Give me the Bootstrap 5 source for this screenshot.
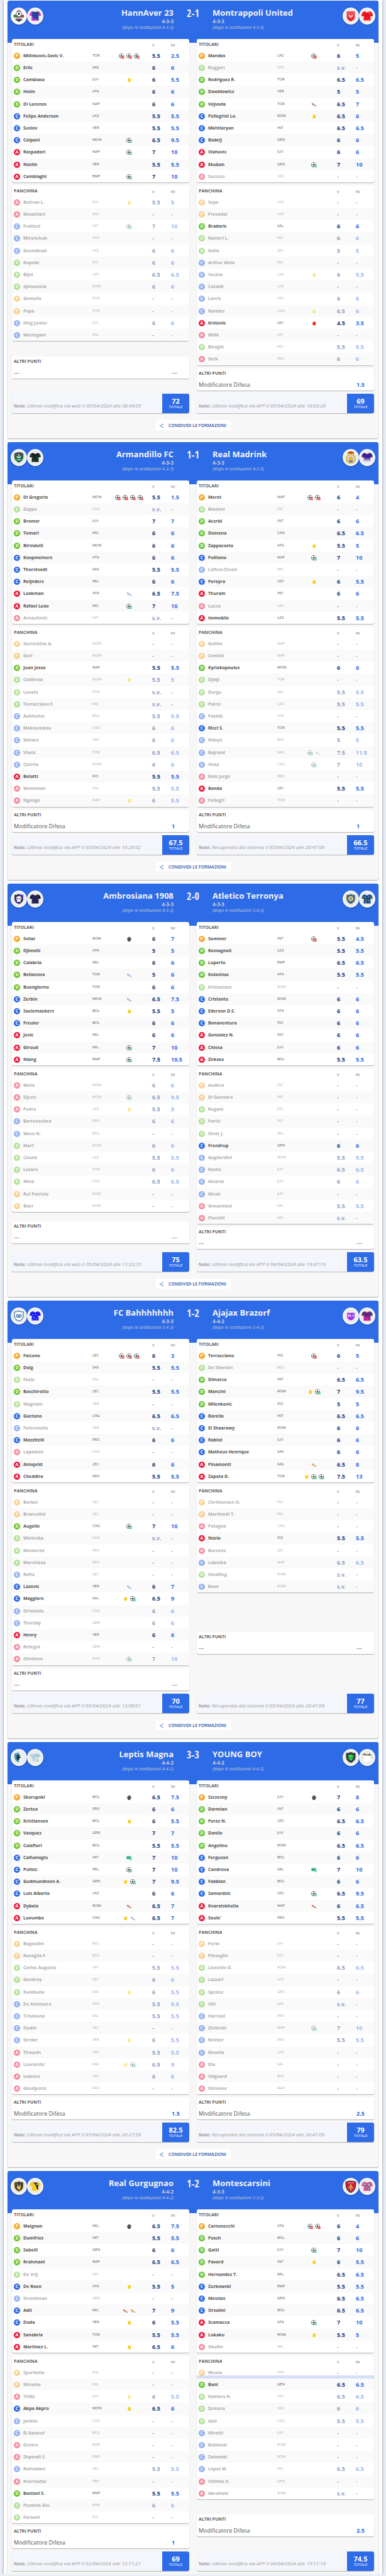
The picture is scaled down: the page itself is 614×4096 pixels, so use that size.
<!DOCTYPE html>
<html lang="it">
<head>
<meta charset="utf-8">
<meta name="viewport" content="width=device-width, initial-scale=1">
<title>Formazioni</title>
<link href="https://cdn.jsdelivr.net/npm/bootstrap@5.3.0/dist/css/bootstrap.min.css" rel="stylesheet">
<style>
  :root { --blu: #2e6be6; --notte: #1b3b7c; }
  body { background: #e9eef7; font-family: "Open Sans", "Noto Sans", sans-serif; color: #555; font-size: 8px; line-height: 12px; }
  .sprites { width: 0; height: 0; }
  .page { margin: 0 6px; padding: 1px 6px 0; background: #fff; box-shadow: 0 0 4px rgba(0,0,0,.4); }
  .match { background: #f7f7f7; border-radius: 3px; margin-bottom: 6px; box-shadow: 0 1px 2px rgba(0,0,0,.35); }
  .match.open { margin-bottom: 0; border-radius: 3px 3px 0 0; }
  .match-head { background: var(--blu); color: #f3f3f5; height: 67px; margin-bottom: -6px; padding: 11px 5px 0; border-radius: 3px 3px 0 0; }
  .crests { width: 52px; }
  .crests svg { width: 26px; height: 27px; filter: drop-shadow(0 1px 1px rgba(0,0,0,.25)); }
  .team-name { font-size: 13px; line-height: 17px; font-weight: 700; }
  .module { font-size: 8px; line-height: 10px; font-weight: 700; color: #c8cbd2; }
  .after { font-size: 7px; line-height: 10px; font-style: italic; color: #c8cbd2; }
  .score { width: 62px; font: 700 16px/19px "Open Sans Condensed", "Roboto Condensed", sans-serif; }
  .sides { padding: 0 7px; gap: 12px; }
  .side { flex: 1 1 0; min-width: 0; gap: 5px; }
  .box { background: #fff; border-radius: 3px; box-shadow: 0 1px 1px rgba(0,0,0,.28); }
  .players { width: 100%; table-layout: fixed; border-collapse: collapse; }
  .players th, .players td { padding: 0; white-space: nowrap; vertical-align: middle; }
  .players thead th { height: 17px; font-size: 6px; font-weight: 400; padding-top: 2px; }
  .players thead th.head { font-size: 7px; font-weight: 700; color: #606060; padding: 0 0 0 3px; }
  .players tbody tr { height: 19px; }
  .players tbody tr:nth-child(5n+4) { height: 20px; }
  .players tbody tr:nth-child(even) { background: #fafafa; }
  .players .pad { padding-left: 3px; }
  .dim > * { opacity: .5; }
  .moved { background: linear-gradient(to top, #d5dff8 5px, transparent 5px); }
  .role { display: block; width: 10px; height: 10px; border-radius: 50%; color: #fff; font: 700 7px/10px "Open Sans", sans-serif; text-align: center; }
  .role-P { background: #f9a82b; } .role-D { background: #62c524; } .role-C { background: #2e6be6; } .role-A { background: #f2183c; }
  .player { font-weight: 700; font-size: 7px; color: #505050; }
  .club { font-size: 6px; line-height: 8px; padding-bottom: 2px !important; }
  .events { text-align: center; padding-right: 7px !important; line-height: 9px; }
  .events span { display: inline-flex; gap: 3px; vertical-align: middle; }
  .events svg { width: 9px; height: 9px; display: block; }
  .vote { font-size: 9px; font-weight: 700; color: var(--notte); }
  .fvote { font-size: 9px; font-weight: 700; color: var(--blu); }
  .extra { padding: 0 3px; height: 35px; }
  .extra h3 { font-size: 7px; line-height: 16px; font-weight: 700; margin: 0; color: #606060; }
  .extra .line { line-height: 19px; font-size: 9px; }
  .extra .value { width: 25px; font-weight: 700; color: var(--blu); }
  .extra .none { color: #555; font-weight: 400; }
  .note { background: #f4f6fb; height: 31px; overflow: hidden; }
  .note p { padding: 13px 0 0 3px; font-size: 8px; color: #9a9a9a; white-space: nowrap; }
  .note strong { font-size: 7px; }
  .total { width: 43px; background: var(--blu); color: #fff; font-size: 6px; line-height: 8px; }
  .total strong { font-size: 11px; line-height: 10px; }
  .share-row { height: 40px; padding-top: 11px; }
  .share { background: #fff; border: 0; border-radius: 1px; width: 119px; height: 16px; padding: 0; font-size: 7px; line-height: 15px; font-weight: 600; color: #1f4ea3; }
  .share svg { width: 6px; height: 8px; }
  .foot { height: 5px; }
</style>
</head>
<body>
<svg class="sprites position-absolute" aria-hidden="true">
  <defs>
    <path id="shirt" d="M9 6 L12 7.4 Q13 8 14 7.4 L17 6 L20.6 8 L22 12.6 L19 13.6 L18.2 12.4 L18.6 20.6 H7.4 L7.8 12.4 L7 13.6 L4 12.6 L5.4 8Z"/>
    <path id="shield" d="M6 7 Q10 7 13 5.4 Q16 7 20 7 V13 Q20 19 13 21.6 Q6 19 6 13Z"/>
    <clipPath id="clipShirt"><use href="#shirt"/></clipPath>
    <clipPath id="clipShield"><use href="#shield"/></clipPath>
    <linearGradient id="redG" x1="0" y1="0" x2="0" y2="1"><stop offset="0" stop-color="#f2565c"/><stop offset="1" stop-color="#ec1c28"/></linearGradient>
    <linearGradient id="fadeG" x1="0" y1="0" x2="0" y2="1"><stop offset=".5" stop-color="#3a1f9c"/><stop offset="1" stop-color="#eee"/></linearGradient>
    <linearGradient id="purpG" x1="0" y1="0" x2="1" y2="0"><stop offset="0" stop-color="#c22be6"/><stop offset="1" stop-color="#7d2ff0"/></linearGradient>
    <linearGradient id="greenG" x1="0" y1="0" x2="0" y2="1"><stop offset=".2" stop-color="#4a4d50"/><stop offset=".6" stop-color="#12733f"/></linearGradient>
  </defs>
  <symbol id="i-ball" viewBox="0 0 18 18"><circle cx="8" cy="8" r="7.4" fill="#fff" stroke="#444" stroke-width="1"/><path fill="#2c2c2c" d="M8 4.8l3 2.2-1.1 3.6H6.1L5 7zM5.5.9h5L8 2.8zM.7 6l2 1.2-.8 3.2-1.3-1zM15.3 6l-2 1.2.8 3.2 1.3-1zM3.6 12l2.6.4.8 2.8-2-.5zM12.4 12l-2.6.4-.8 2.8 2-.5z"/></symbol>
  <symbol id="i-g" viewBox="0 0 18 18"><use href="#i-ball"/><circle cx="13.6" cy="12.6" r="4.2" fill="#3fd487"/><path d="M11.4 12.8l1.6 1.5 2.8-3" fill="none" stroke="#fff" stroke-width="1.3"/></symbol>
  <symbol id="i-x" viewBox="0 0 18 18"><use href="#i-ball"/><rect x="10" y="9" width="7.4" height="7.4" rx="2.6" fill="#f02a2a"/><path d="M12 11l3.4 3.4M15.4 11L12 14.4" stroke="#fff" stroke-width="1.3"/></symbol>
  <symbol id="i-y" viewBox="0 0 18 18"><path fill="#f5d226" d="M6.4 2.6l8 1.8q.9.2.7 1l-2 9q-.2.9-1 .7l-7-1.8q-.9-.2-.7-1l1.2-9q.1-.8.8-.7z"/></symbol>
  <symbol id="i-r" viewBox="0 0 18 18"><path fill="#f0231c" d="M6.4 2.6l8 1.8q.9.2.7 1l-2 9q-.2.9-1 .7l-7-1.8q-.9-.2-.7-1l1.2-9q.1-.8.8-.7z"/></symbol>
  <symbol id="shoe" viewBox="0 0 18 18"><path d="M1.5 4.5l3-1.5 2.5 2 8 6.5q2 1.6 1.5 3-2 .6-5-1.5L2.5 8.5Q1 7 1.5 4.5z"/><path d="M2 8l9 5.5 5.2 1" fill="none" stroke="#0005" stroke-width="1"/></symbol>
  <symbol id="i-k" viewBox="0 0 18 18"><path fill="#333" d="M5 15.5L3 8.5 2.2 5.5l1.5-.5L5.5 8 5.5 2l1.8-.3.7 4.8L9 1.2l1.9.2-.1 5.2 1.7-4.2 1.6.6-1 5.2 2-1.4 1.2 1-3.6 5-.7 3.2z"/><path fill="#e4c53b" d="M8 8.5l1.4-.6 1.3 2-1.7 2.6-1.6-1.6z"/></symbol>
  <symbol id="i-p" viewBox="0 0 18 18"><path fill="#17a06c" d="M1 3h14v9H1z"/><path d="M3 5.5h3M10 5.5h3M5 8h6" stroke="#a5e6cb" stroke-width="1.2" fill="none"/><circle cx="13.6" cy="11.6" r="4.2" fill="#3fd487"/><path d="M11.4 11.8l1.6 1.5 2.8-3" fill="none" stroke="#fff" stroke-width="1.3"/></symbol>
  <symbol id="disc" viewBox="0 0 26 27"><ellipse cx="13" cy="13.5" rx="12.9" ry="13.4" fill="#fff"/><ellipse cx="13" cy="13.5" rx="11.6" ry="12" fill="#ededed"/></symbol>

  <symbol id="c1a" viewBox="0 0 26 27"><use href="#disc"/><ellipse cx="13" cy="13.5" rx="11.6" ry="12" fill="#fff"/><circle cx="10.6" cy="4.6" r=".8" fill="#f06a9a"/><circle cx="13" cy="3.8" r=".9" fill="#f06a9a"/><circle cx="15.4" cy="4.6" r=".8" fill="#f06a9a"/><path d="M7 16h12v3l-6 4-6-4z" fill="#2a3c52"/><circle cx="13" cy="10" r="4.5" fill="#fff" stroke="#223" stroke-width=".8"/><path d="M13 8l1.8 1.3-.7 2.2h-2.2l-.7-2.2zM10 6.5l2-.7v1.4zM16 6.5l-2-.7v1.4z" fill="#223"/><path d="M4.5 12q4-2 8 2 3 1 8-2.5v3.5l-8 2-8-1.5z" fill="#2f7d46"/><path d="M16 12.5q2-1.5 5-1l.4 4-4.4.5z" fill="#b03844"/><path d="M6.5 15.5h13v3h-13z" fill="#e9dede"/><path d="M9 16h7v2H9z" fill="#ee7aa6"/></symbol>
  <symbol id="c1b" viewBox="0 0 26 27"><use href="#disc"/><g clip-path="url(#clipShirt)"><path fill="#21479b" d="M0 0h26v27H0z"/><path fill="#f02be6" d="M3 5h5v8H3zM18.500 5h5v9h-5zM7 13q5 6 12 7v2H7z"/><path d="M8.5 15q2 4 3 7M11 17l3 4" stroke="#21479b" stroke-width=".6"/></g><path d="M11 6.8q2 2 4 0" stroke="#7a1224" fill="none"/></symbol>
  <symbol id="c2a" viewBox="0 0 26 27"><use href="#disc"/><path d="M6.5 6h13v8.5Q19.500 20 13 22q-6.500-2-6.500-7.500z" fill="url(#redG)"/><path d="M9.5 11.500q2 0 2.400 1.300L13 14.500l1.100-1.700q.4-1.300 2.400-1.300-.6 3.500-3.500 4.800-2.900-1.300-3.500-4.800z" fill="#fff"/></symbol>
  <symbol id="c2b" viewBox="0 0 26 27"><use href="#disc"/><use href="#shirt" fill="#fb1420"/><path d="M8 11h10M8 13h10" stroke="#8a0d16" stroke-width=".4"/><path d="M4 12.600l3 1M22 12.600l-3 1" stroke="#222"/><path d="M16 8.500h1v2h-1z" fill="#dfe9ff"/></symbol>
  <symbol id="c3a" viewBox="0 0 26 27"><use href="#disc"/><path d="M7 6.500L13 5l6 1.500 1 1v6Q19 19 13 21.500 7 19 6 13.500v-6z" fill="url(#greenG)" stroke="#555" stroke-width=".6"/><path d="M13 8v6M10 11q.5 3 3 3 2.500 0 3-3M9.500 17h7" stroke="#fff" stroke-width="1.200" fill="none"/></symbol>
  <symbol id="c3b" viewBox="0 0 26 27"><use href="#disc"/><use href="#shirt" fill="#17211d"/><path d="M9 12l2 3M14 11l2 4M10 17l3 2M15 18l2-2M6 9l1 3M19 9l1 3" stroke="#0d6a3c" stroke-width="1.100"/></symbol>
  <symbol id="c4a" viewBox="0 0 26 27"><use href="#disc"/><circle cx="13" cy="15.500" r="7.200" fill="#d9d9dc" stroke="#d8b62f" stroke-width="1.800"/><path d="M8.500 7.500Q7 4 10 4.500q3-2 6 0 3-.5 1.500 3z" fill="#c23a2d" stroke="#dbb63a" stroke-width=".8"/><path d="M9 13.500h8v5H9z" fill="#b9bcc8"/><path d="M13 11.500q2.500 0 2 3l1.500 1.500-2 3.500h-4L9 16.500l2-1q-.5-3.500 2-4z" fill="#f5b91f"/><path d="M9.500 18.500h7l-1 2.500h-5z" fill="#3a76c4"/></symbol>
  <symbol id="c4b" viewBox="0 0 26 27"><use href="#disc"/><use href="#shirt" fill="url(#fadeG)"/><path d="M11 6.800q2 2 4 0M4 12.600l3 1M22 12.600l-3 1" stroke="#e6b82c" fill="none"/></symbol>
  <symbol id="c5a" viewBox="0 0 26 27"><use href="#disc"/><g clip-path="url(#clipShield)"><path fill="#303048" d="M0 0h26v27H0z"/><path fill="#4a3aa0" d="M13 0h13v13H13zM0 13h13v13H0z"/></g><path d="M9 12.500Q9 9 13 9t4 3.500q0 2-1.300 3v2.500h-5.400V15.500Q9 14.500 9 12.500z" fill="#fff"/><circle cx="11.300" cy="13" r="1.100" fill="#333"/><circle cx="14.700" cy="13" r="1.100" fill="#333"/></symbol>
  <symbol id="c5b" viewBox="0 0 26 27"><use href="#disc"/><use href="#shirt" fill="#1d1b33"/><path d="M9.500 7.500v13M12 8.500v12M14.500 8.500v12M17 7.500v13" stroke="#3b2f92" stroke-width=".9"/></symbol>
  <symbol id="c6a" viewBox="0 0 26 27"><use href="#disc"/><use href="#shield" fill="#2a66a8" stroke="#e2bf49"/><circle cx="13" cy="13" r="4" fill="#e7cc62"/><circle cx="13" cy="13.200" r="2" fill="#6d94a8"/></symbol>
  <symbol id="c6b" viewBox="0 0 26 27"><use href="#disc"/><use href="#shirt" fill="#174b8e"/><path d="M9 9l2 1-1 2zM14 10l2-1v2zM11 14l2 1-2 1zM15 15l2 1-1 2zM9 18l2-1 1 2zM5.500 9l1.500 1-1 1.500zM19 9l1.500 1.500-1 1z" fill="#f3c32c"/><path d="M4 12.600l3 1M22 12.600l-3 1" stroke="#f3c32c"/></symbol>
  <symbol id="c7a" viewBox="0 0 26 27"><use href="#disc"/><use href="#shield" fill="#fff" stroke="#1f5f9c" stroke-width="1.100"/><path d="M9 11.500q2-1.500 3.500 0h1q1.500-1.500 3.500 0l.5 3-2 1.500h-5l-2-1.500z" fill="#2c6ca8"/><circle cx="11" cy="13.500" r="1.200" fill="#fff"/><circle cx="15" cy="13.500" r="1.200" fill="#fff"/></symbol>
  <symbol id="c7b" viewBox="0 0 26 27"><use href="#disc"/><use href="#shirt" fill="#1a18f2"/><path d="M8.500 10l2 1-1 2zM13 9.500l2 2-2 .5zM16 14l2-1-.5 3zM10 14.500l3 .5-2 2zM13.500 17l2 .5-1 2zM9 18l1.500.5-1 1.500z" fill="#7fb4ff"/></symbol>
  <symbol id="c8a" viewBox="0 0 26 27"><use href="#disc"/><path d="M7 8.500h12v6q0 4-6 6-6-2-6-6z" fill="url(#purpG)"/><text x="13" y="15" font-size="5" font-weight="700" text-anchor="middle" fill="#fff" font-family="Open Sans">65,5</text></symbol>
  <symbol id="c8b" viewBox="0 0 26 27"><use href="#disc"/><use href="#shirt" fill="#5b2a80"/><path d="M8 15l2-1 1 2 2-2 2 2 1-2 2 2v5H8z" fill="#d61d9c"/><path d="M10 17l1 2M14 16l2 3" stroke="#5b2a80"/><path d="M11 6.800q2 2 4 0M4 12.600l3 1M22 12.600l-3 1" stroke="#e29a34" fill="none"/></symbol>
  <symbol id="c9a" viewBox="0 0 26 27"><use href="#disc"/><path d="M6 7.500l7-2v16q-7-3-7-9z" fill="#3c93b5"/><path d="M13 5.500l6 2v5q0 6-6 9z" fill="#e8f1f4"/><path d="M11 10q3-2 4 .5-3 .5-4 2.500 3-1.500 5 0-1 2-4 2 2 .5 1 2.500-3-.5-3-3-.5-3 1-4.500z" fill="#1c2a33" stroke="#1c2a33" stroke-width=".6"/></symbol>
  <symbol id="c9b" viewBox="0 0 26 27"><use href="#disc"/><use href="#shirt" fill="#dde6ea"/><path d="M12 19q-3-5 1-7 3-1 4 1 .5-4-3-4-5 .5-6 6M5 9l3 2M15 16l3 4M18 8l2 4" stroke="#7fb7cf" stroke-width="1.300" fill="none"/></symbol>
  <symbol id="c10a" viewBox="0 0 26 27"><use href="#disc"/><use href="#shield" fill="#3c4244" stroke="#23282a"/><path d="M13 9q4 0 4 3.500 0 3-4 6-4-3-4-6Q9 9 13 9z" fill="#2fe04a"/><path d="M10 12.500l2 1.500-1 1zM16 12.500L14 14l1 1z" fill="#111"/></symbol>
  <symbol id="c10b" viewBox="0 0 26 27"><use href="#disc"/><use href="#shirt" fill="#fff"/><path d="M8 6.800l3.500 3.500M18 6.800l-3.500 3.500M5 9l15.800 1" stroke="#333" stroke-width="1.200"/><path d="M11 6.800q2 2 4 0M4 12.600l3 1M22 12.600l-3 1" stroke="#e6b82c" fill="none"/></symbol>
  <symbol id="c11a" viewBox="0 0 26 27"><use href="#disc"/><use href="#shield" fill="#3b3c3e" stroke="#d4a72c"/><path d="M10.500 9v5l-1 1 2.500 3.500h3l1-4.500-.5-4-1 .2-.2 2.800h-2.800L11.500 9z" fill="#e9c44a"/></symbol>
  <symbol id="c11b" viewBox="0 0 26 27"><use href="#disc"/><use href="#shirt" fill="#f4cb2b"/><path d="M10 7l4 5 2 6h2L17 8z" fill="#23262b"/><path d="M15 9h1.500v2H15z" fill="#fff"/></symbol>
  <symbol id="c12a" viewBox="0 0 26 27"><use href="#disc"/><path d="M4.500 6q8-3 17 0l-.5 8q-1.500 7-8 10-6.500-3-8-10z" fill="#16295c"/><path d="M5.500 7q7.500-2.500 15 0l-.5 7q-1.200 6-7 8.800Q7.200 20 6 14z" fill="#d8202a"/><path d="M13 9l1.500 3 3 5-3.500-1v4.500h-2V16l-3.500 1 3-5z" fill="#c9a15c"/><path d="M8 7.800h10" stroke="#f6d7d7" stroke-width=".8"/></symbol>
  <symbol id="c12b" viewBox="0 0 26 27"><use href="#disc"/><use href="#shirt" fill="#e8408c"/><path d="M6 8l4 1 2 2-4 1zM14 8l4 2-1 3-3-1zM9 14l4 1-2 2zM14 16l4 1-3 2zM9 19l3-.5" stroke="#3d8f96" stroke-width=".9" fill="#a8d6d4"/></symbol>
</svg>

<main class="page">
  <div id="matches"></div>
</main>

<script src="https://cdn.jsdelivr.net/npm/bootstrap@5.3.0/dist/js/bootstrap.bundle.min.js"></script>
<script>
// One player per entry: role, name, club, event codes, vote, fantasy vote.
// A leading "~" fades the player, a leading "_" marks the moved one.
const matches = [
{ score: '2-1', teams: [
 { name: 'HannAver 23', mod: '4-3-3', after: '4-3-3', crest: 1, total: '72', note: 'Ultima modifica via web il 05/04/2024 alle 08:49:05',
  first: `P,Milinkovic-Savic V.,TOR,xxx,5.5,2.5;D,Erlic,SAS,,6,6;D,Cambiaso,JUV,y,6,5.5;D,Holm,ATA,,6,6;D,Di Lorenzo,NAP,,6,6;C,Felipe Anderson,LAZ,,5.5,5.5;C,Suslov,VER,,5.5,5.5;C,Colpani,MON,g,6.5,9.5;A,Raspadori,NAP,g,7,10;A,Noslin,VER,,5.5,5.5;A,Cambiaghi,EMP,g,7,10`,
  bench: `~A,Beltran L.,FIO,y,5.5,5;~A,Mulattieri,SAS,,-,-;~C,Frattesi,INT,g,7,10;~C,Miranchuk,ATA,,-,-;~C,Guendouzi,LAZ,,6,6;~D,Kayode,FIO,,6,6;~D,Bijol,UDI,,6.5,6.5;~D,Spinazzola,ROM,,6,6;~P,Gemello,TOR,,-,-;~P,Popa,TOR,,-,-;~C,Iling Junior,JUV,,6,6;~C,Martegani,SAL,,-,-` },
 { name: 'Montrappoli United', mod: '4-3-3', after: '4-3-3', crest: 2, total: '69', extra: '1.5', note: 'Ultima modifica via APP il 05/04/2024 alle 18:03:26',
  first: `P,Mandas,LAZ,x,6,5;~D,Ruggeri,ATA,,s.v.,-;D,Rodriguez R.,TOR,,6.5,6.5;D,Dawidowicz,VER,,5,5;D,Vojvoda,TOR,b,6.5,7;C,Pellegrini Lo.,ROM,y,6.5,6;C,Mkhitaryan,INT,,6.5,6.5;C,Badelj,GEN,,6,6;A,Vlahovic,JUV,,6,6;A,Ekuban,GEN,g,7,10;~A,Success,UDI,,-,-`,
  bench: `~P,Sepe,LAZ,,-,-;~P,Provedel,LAZ,,-,-;D,Bradaric,SAL,,6,6;~D,Ranieri L.,FIO,,6,6;~D,Gallo,LEC,,5,5;~C,Arthur Melo,FIO,,-,-;~C,Vecino,LAZ,y,6,5.5;~C,Cataldi,LAZ,,-,-;~C,Lovric,UDI,,6,6;~C,Nandez,CAG,y,6.5,6;A,Krstovic,LEC,r,4.5,3.5;~A,Milik,JUV,,-,-;~D,Biraghi,FIO,,5.5,5.5;~A,Seck,FRO,,6,6` }]},
{ score: '1-1', teams: [
 { name: 'Armandillo FC', mod: '4-3-3', after: '4-3-3', crest: 3, total: '67.5', extra: '1', note: 'Ultima modifica via APP il 05/04/2024 alle 19:26:02',
  first: `P,Di Gregorio,MON,xxxx,5.5,1.5;~D,Zappa,CAG,,s.v.,-;D,Bremer,JUV,,7,7;D,Tomori,MIL,,6,6;D,Birindelli,MON,,6,6;C,Koopmeiners,ATA,,6,6;C,Thorstvedt,SAS,,5.5,5.5;C,Reijnders,MIL,,6,6;A,Lookman,ATA,a,6.5,7.5;A,Rafael Leao,MIL,g,7,10;~A,Arnautovic,INT,,s.v.,-`,
  bench: `~P,Sorrentino A.,MON,,-,-;~P,Gori,MON,,-,-;D,Juan Jesus,NAP,,5.5,5.5;~D,Caldirola,MON,y,5.5,5;~D,Lovato,TOR,,s.v.,-;~D,Terracciano F.,MIL,,s.v.,-;~C,Aebischer,BOL,,5.5,5.5;~C,Makoumbou,CAG,,6,6;~C,Walace,UDI,,6,6;~C,Vlasic,TOR,,6.5,6.5;~C,Ciurria,MON,,6,6;A,Belotti,FIO,,5.5,5.5;~A,Weissman,SAL,,5.5,5.5;~A,Ngonge,NAP,y,6,5.5` },
 { name: 'Real Madrink', mod: '4-3-3', after: '4-3-3', crest: 4, total: '66.5', extra: '1', note: 'Recuperata dal sistema il 05/04/2024 alle 20:47:09',
  first: `P,Meret,NAP,xx,6,4;~D,Bastoni,INT,,-,-;D,Acerbi,INT,,6,6;D,Dossena,CAG,,6.5,6.5;D,Zappacosta,ATA,y,5.5,5;C,Politano,NAP,g,7,10;~C,Loftus-Cheek,MIL,,-,-;C,Pereyra,UDI,y,6,5.5;A,Thuram,INT,,6,6;~A,Lucca,UDI,,-,-;A,Immobile,LAZ,,5.5,5.5`,
  bench: `~P,Gollini,NAP,,-,-;~P,Contini,NAP,,-,-;D,Kyriakopoulos,MON,,6,6;~D,Djidji,TOR,,-,-;~D,Dorgu,LEC,,5.5,5.5;~D,Patric,LAZ,,5.5,5.5;~C,Pasalic,ATA,,-,-;C,Ricci S.,TOR,,5.5,5.5;~C,Ndoye,BOL,,5,5;~C,Bajrami,SAS,ga,7.5,11.5;~C,Viola,CAG,g,7,10;~A,Kaio Jorge,FRO,,-,-;A,Banda,LEC,,5.5,5.5;~A,Pellegri,TOR,,-,-` }]},
{ score: '2-0', teams: [
 { name: 'Ambrosiana 1908', mod: '4-3-3', after: '4-3-3', crest: 5, total: '75', note: 'Ultima modifica via web il 05/04/2024 alle 11:23:15',
  first: `P,Svilar,ROM,k,6,7;D,Djimsiti,ATA,,5,5;D,Calabria,MIL,,6,6;D,Bellanova,TOR,a,5,6;D,Buongiorno,TOR,,6,6;C,Zerbin,MON,a,6.5,7.5;C,Saelemaekers,BOL,y,5.5,5;C,Freuler,BOL,,6,6;A,Jovic,MIL,,6,6;A,Giroud,MIL,g,7,10;A,Niang,EMP,g,7.5,10.5`,
  bench: `~A,Mota,MON,,6,6;~A,Djuric,MON,g,6.5,9.5;~A,Pedro,LAZ,y,5.5,5;~C,Barrenechea,FRO,,6,6;~C,Moro N.,BOL,,-,-;~D,Mari',MON,,6,6;~D,Casale,LAZ,,5.5,5.5;~D,Lazaro,TOR,,6,6;~D,Mina,CAG,,6.5,6.5;~P,Rui Patricio,ROM,,-,-;~P,Boer,ROM,,-,-` },
 { name: 'Atletico Terronya', mod: '4-3-3', after: '3-4-3', crest: 6, total: '63.5', note: 'Ultima modifica via APP il 04/04/2024 alle 19:47:19',
  first: `P,Sommer,INT,x,5.5,4.5;D,Romagnoli,LAZ,,5.5,5.5;D,Luperto,EMP,,6.5,6.5;D,Kolasinac,ATA,,5.5,5.5;~D,Kristensen,ROM,,-,-;C,Cristante,ROM,,6,6;C,Ederson D.S.,ATA,,6,6;C,Bonaventura,FIO,,6,6;A,Gonzalez N.,FIO,,6,6;A,Chiesa,JUV,,6,6;A,Zirkzee,BOL,,5.5,5.5`,
  bench: `~P,Audero,INT,,-,-;~P,Di Gennaro,INT,,-,-;~D,Rugani,JUV,,-,-;~D,Parisi,FIO,,-,-;~D,Simic J.,MIL,,-,-;C,Frendrup,GEN,,6,6;~C,Gagliardini,MON,,5.5,5.5;~C,Kostic,JUV,,6.5,6.5;~C,Alcaraz,JUV,,6,6;~C,Weah,JUV,,-,-;~A,Ikwuemesi,SAL,,5.5,5.5;~A,Pierotti,LEC,,s.v.,-` }]},
{ score: '1-2', teams: [
 { name: 'FC Bahhhhhhh', mod: '4-3-3', after: '3-4-3', crest: 7, total: '70', note: 'Ultima modifica via APP il 05/04/2024 alle 13:06:01',
  first: `P,Falcone,LEC,xxx,6,3;D,Doig,SAS,,5.5,5.5;~D,Fazio,SAL,,-,-;D,Baschirotto,LEC,,5.5,5.5;~D,Magnani,VER,,-,-;C,Gaetano,CAG,,6.5,6.5;~C,Folorunsho,VER,,s.v.,-;C,Mazzitelli,FRO,,6,6;~A,Lapadula,CAG,,-,-;A,Almqvist,LEC,,6,6;A,Cheddira,FRO,,5.5,5.5`,
  bench: `~P,Borbei,LEC,,-,-;~P,Brancolini,LEC,,-,-;D,Augello,CAG,g,7,10;~D,Wieteska,CAG,,s.v.,-;~D,Monterisi,FRO,,-,-;~D,Marchizza,FRO,,-,-;~C,Rafia,LEC,,-,-;C,Lazovic,VER,a,6,7;C,Maggiore,SAL,yg,6.5,9;~C,Oristanio,CAG,,6,6;~C,Thorsby,GEN,,6,6;A,Henry,VER,,6,6;~A,Retegui,GEN,,-,-;~A,Osimhen,NAP,g,7,10` },
 { name: 'Ajajax Brazorf', mod: '4-4-2', after: '3-4-3', crest: 8, total: '77', note: 'Recuperata dal sistema il 05/04/2024 alle 20:47:09',
  first: `P,Terracciano,FIO,x,6,5;~D,De Silvestri,BOL,,-,-;D,Dimarco,INT,,6.5,6.5;D,Mancini,ROM,yg,7,9.5;D,Milenkovic,FIO,,5,5;C,Barella,INT,,6.5,6.5;C,El Shaarawy,ROM,,6,6;C,Rabiot,JUV,,6,6;C,Matheus Henrique,SAS,,6,6;A,Pinamonti,SAS,o,6.5,8;A,Zapata D.,TOR,ygg,7.5,13`,
  bench: `~P,Christensen O.,FIO,,-,-;~P,Martinelli T.,FIO,,-,-;~A,Petagna,CAG,,-,-;A,Nzola,FIO,,5.5,5.5;~A,Burnete,LEC,,-,-;~C,Lobotka,NAP,,6.5,6.5;~D,Smalling,ROM,,s.v.,-;~C,Bove,ROM,,s.v.,-` }]},
{ score: '3-3', teams: [
 { name: 'Leptis Magna', mod: '4-4-2', after: '4-4-2', crest: 9, total: '82.5', extra: '1.5', note: 'Ultima modifica via APP il 05/04/2024 alle 20:27:58',
  first: `P,Skorupski,BOL,k,6.5,7.5;D,Zortea,FRO,,6,6;D,Kristiansen,BOL,y,6,5.5;D,Vasquez,GEN,,7,7;D,Calafiori,BOL,,5.5,5.5;C,Calhanoglu,INT,p,7,10;C,Pulisic,MIL,g,7,10;C,Gudmundsson A.,GEN,yg,7,9.5;C,Luis Alberto,LAZ,,6,6;A,Dybala,ROM,b,6.5,7;A,Luvumbo,CAG,ya,6.5,7`,
  bench: `~P,Bagnolini,BOL,,-,-;~P,Ravaglia F.,BOL,,-,-;~D,Carlos Augusto,INT,,5.5,5.5;~D,Gendrey,LEC,,6,6;~D,Kumbulla,SAS,y,6,5.5;~C,De Ketelaere,ATA,,5.5,5.5;~C,Tchaouna,SAL,,5.5,5.5;~C,Oudin,LEC,,-,-;~C,Serdar,VER,y,6,5.5;~A,Thauvin,UDI,,5.5,5.5;~A,Lauriente',SAS,yg,6.5,9;~A,Isaksen,LAZ,,6,6;~A,Ghedjemis,FRO,,-,-` },
 { name: 'YOUNG BOY', mod: '4-4-2', after: '4-4-2', crest: 10, total: '79', extra: '2.5', note: 'Recuperata dal sistema il 05/04/2024 alle 20:47:09',
  first: `P,Szczesny,JUV,k,7,8;D,Darmian,INT,,6,6;D,Perez N.,UDI,,6.5,6.5;D,Danilo,JUV,,6,6;D,Angelino,ROM,,6.5,6.5;C,Ferguson,BOL,,6,6;C,Candreva,SAL,p,7,10;C,Fabbian,BOL,,6,6;C,Samardzic,UDI,g,6.5,9.5;A,Kvaratskhelia,NAP,b,6,6.5;A,Soule',FRO,,5.5,5.5`,
  bench: `~P,Perin,JUV,,-,-;~P,Pinsoglio,JUV,,-,-;~D,Llorente D.,ROM,,6.5,6.5;~D,Lazzari,LAZ,,-,-;~D,Spence,GEN,,6,6;~D,Viti,SAS,,s.v.,-;~C,Harroui,FRO,,-,-;~C,Zielinski,NAP,g,7,10;~C,Reinier,FRO,,5.5,5.5;~C,Rovella,LAZ,,-,-;~A,Dia,SAL,,-,-;~A,Odgaard,BOL,,-,-;~A,Simeone,NAP,,-,-` }]},
{ score: '1-2', open: true, teams: [
 { name: 'Real Gurgugnao', mod: '4-4-2', after: '4-4-2', crest: 11, total: '69', extra: '1', note: 'Ultima modifica via APP il 02/04/2024 alle 12:11:21',
  first: `P,Maignan,MIL,k,6.5,7.5;D,Dumfries,INT,,5.5,5.5;D,Sabelli,GEN,,6,6;D,Rrahmani,NAP,,6.5,6.5;~D,De Vrij,INT,,-,-;C,De Roon,ATA,y,5.5,5;~C,Strootman,GEN,,-,-;C,Adli,MIL,bo,7,9;C,Duda,VER,y,6,5.5;A,Sanabria,TOR,,5.5,5.5;A,Martinez L.,INT,y,6.5,6`,
  bench: `~P,Sportiello,MIL,,-,-;~P,Mirante,MIL,,-,-;~A,Yildiz,JUV,y,6,5.5;C,Akpa Akpro,MON,y,6.5,6;~C,Jankto,CAG,,-,-;~C,El Azzouzi,BOL,,-,-;~A,Destro,EMP,,-,-;~A,Shpendi S.,EMP,,-,-;~C,Ramadani,LEC,,5.5,5.5;~A,Kvernadze,FRO,,-,-;D,Bastoni S.,EMP,,5.5,5.5;~D,Pezzella Giu.,EMP,,6,6;~D,Faraoni,FIO,,-,-` },
 { name: 'Montescarsini', mod: '4-3-3', after: '5-3-2', crest: 12, total: '74.5', extra: '2.5', note: 'Ultima modifica via APP il 04/04/2024 alle 15:11:10',
  first: `P,Carnesecchi,ATA,xx,6,4;D,Posch,BOL,,6,6;D,Gatti,JUV,g,7,10;D,Pavard,INT,y,6,5.5;D,Hernandez T.,MIL,,6.5,6.5;C,Zurkowski,EMP,,5.5,5.5;C,Messias,GEN,,6.5,6.5;C,Orsolini,BOL,,6.5,6.5;A,Scamacca,ATA,g,7,10;A,Lukaku,ROM,y,5.5,5;~A,Okafor,MIL,,-,-`,
  bench: `_~P,Musso,ATA,,-,-;D,Bani,GEN,,6.5,6.5;~D,Kamara H.,UDI,,6.5,6.5;~D,Zemura,UDI,,6,6;~D,Azzi,CAG,,5.5,5.5;~C,Miretti,JUV,,-,-;~C,Baldanzi,ROM,,-,-;~C,Zalewski,ROM,,-,-;~C,Lopez M.,FIO,,6.5,6.5;~A,Vitinha O.,GEN,,-,-;~A,Abraham,ROM,,s.v.,-` }]}
];

const shoes = { a: '#a9c8ea', b: '#cf8f7e', o: '#e8b860' };
const icon = c => shoes[c]
  ? `<svg style="fill:${shoes[c]}"><use href="#shoe"/></svg>`
  : `<svg><use href="#i-${c}"/></svg>`;

const row = line => {
  const moved = line.startsWith('_');
  const dim = line.includes('~');
  const [role, name, club, ev, v, fv] = line.replace(/[_~]/g, '').split(',');
  return `<tr class="${dim ? 'dim' : ''} ${moved ? 'moved' : ''}">
    <td class="pad"><span class="role role-${role}">${role}</span></td>
    <td class="player">${name}</td><td class="club">${club}</td>
    <td class="events"><span>${[...ev].map(icon).join('')}</span></td>
    <td class="vote">${v}</td><td class="fvote">${fv}</td></tr>`;
};

const table = (title, data) => `<div class="box"><table class="players">
  <colgroup><col style="width:18px"><col><col style="width:30px"><col style="width:65px"><col style="width:30px"><col style="width:29px"></colgroup>
  <thead><tr><th class="head" colspan="4">${title}</th><th>V</th><th>FV</th></tr></thead>
  <tbody>${data.split(';').map(l => row(l.trim())).join('')}</tbody></table></div>`;

const side = t => `<section class="side d-flex flex-column">
  ${table('TITOLARI', t.first)}${table('PANCHINA', t.bench)}
  <div class="box extra my-auto"><h3>ALTRI PUNTI</h3>
    <div class="line d-flex justify-content-between"><span>${t.extra ? 'Modificatore Difesa' : '---'}</span>
    <span class="value ${t.extra ? '' : 'none'}">${t.extra || '---'}</span></div></div>
  <div class="box note d-flex justify-content-between">
    <p class="m-0"><strong>Note:</strong> <em>${t.note}</em></p>
    <div class="total d-flex flex-column align-items-center justify-content-center"><strong>${t.total}</strong>TOTALE</div></div>
</section>`;

const crests = n => `<div class="crests d-flex"><svg><use href="#c${n}a"/></svg><svg><use href="#c${n}b"/></svg></div>`;
const title = (t, align) => `<div class="flex-fill ${align}"><div class="team-name">${t.name}</div>
  <div class="module">${t.mod}</div><div class="after">(dopo le sostituzioni ${t.after})</div></div>`;

document.getElementById('matches').innerHTML = matches.map(m => {
  const [home, away] = m.teams;
  return `<article class="match ${m.open ? 'open' : ''}">
    <header class="match-head d-flex align-items-start">
      <div class="d-flex" style="flex:1 1 0">${crests(home.crest)}${title(home, 'text-end')}</div>
      <div class="score text-center">${m.score}</div>
      <div class="d-flex" style="flex:1 1 0">${title(away, 'text-start')}${crests(away.crest)}</div>
    </header>
    <div class="sides d-flex position-relative">${side(home)}${side(away)}</div>
    ${m.open ? '<div class="foot"></div>' : `<div class="share-row text-center"><button type="button" class="share">
      <svg class="me-2" viewBox="0 0 14 16" fill="none" stroke="#1f4ea3" stroke-width="1.300"><circle cx="2.500" cy="8" r="1.700"/><circle cx="11" cy="2.500" r="1.700"/><circle cx="11" cy="13.500" r="1.700"/><path d="M4 7l5.500-3.500M4 9l5.500 3.500"/></svg>CONDIVIDI LE FORMAZIONI</button></div>`}
  </article>`;
}).join('');
</script>
</body>
</html>
